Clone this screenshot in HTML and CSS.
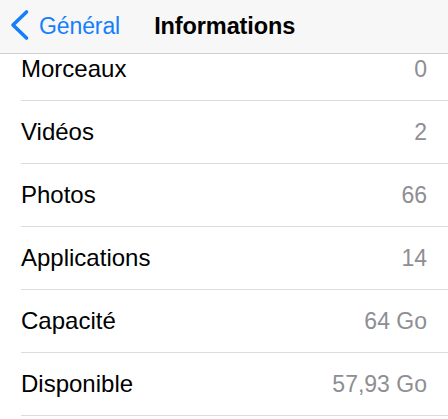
FILE: index.html
```html
<!DOCTYPE html>
<html lang="fr">
<head>
<meta charset="utf-8">
<link rel="stylesheet" href="styles.css">
</head>
<body>
<div class="screen">
  <header class="nav">
    <a class="back">
      <svg class="chev" width="22" height="32" viewBox="0 0 22 32"><path d="M18.5 3 L5 16 L18.5 29" fill="none" stroke="#157efb" stroke-width="3.6" stroke-linecap="round" stroke-linejoin="round"/></svg>
      <span class="back-label">Général</span>
    </a>
    <h1 class="title">Informations</h1>
  </header>
  <main class="scroll">
    <ul class="list">
      <li class="row"><span class="label">Morceaux</span><span class="value">0</span></li>
      <li class="row"><span class="label">Vidéos</span><span class="value">2</span></li>
      <li class="row"><span class="label">Photos</span><span class="value">66</span></li>
      <li class="row"><span class="label">Applications</span><span class="value">14</span></li>
      <li class="row"><span class="label">Capacité</span><span class="value">64 Go</span></li>
      <li class="row"><span class="label">Disponible</span><span class="value">57,93 Go</span></li>
    </ul>
  </main>
</div>
</body>
</html>
```
FILE: styles.css
```css
html, body {
  margin: 0;
  padding: 0;
  background: #ffffff;
}
body {
  font-family: "Liberation Sans", Arial, sans-serif;
  width: 448px;
  height: 419px;
  overflow: hidden;
}
.screen {
  display: flex;
  flex-direction: column;
  height: 419px;
}
.nav {
  flex: 0 0 auto;
  height: 53px;
  background: #f7f7f7;
  border-bottom: 1px solid #cfcfd2;
  display: flex;
  align-items: center;
  padding-left: 8px;
  box-sizing: content-box;
}
.back {
  display: flex;
  align-items: center;
  color: #157efb;
  margin-top: -1px;
}
.chev {
  display: block;
  margin-top: -2px;
}
.back-label {
  font-size: 23px;
  margin-left: 9px;
  letter-spacing: -0.1px;
}
.title {
  margin: 0 0 0 34px;
  font-size: 23.5px;
  font-weight: bold;
  color: #000;
  letter-spacing: -0.1px;
}
.scroll {
  flex: 1 1 auto;
  overflow: hidden;
}
.list {
  list-style: none;
  margin: -16px 0 0 0;
  padding: 0;
}
.row {
  height: 62px;
  margin-left: 21px;
  padding-right: 21px;
  border-bottom: 1px solid #dcdcdf;
  display: flex;
  align-items: center;
  justify-content: space-between;
  font-size: 24px;
}
.label {
  color: #000;
}
.value {
  color: #8e8e93;
  font-size: 23px;
}
```
